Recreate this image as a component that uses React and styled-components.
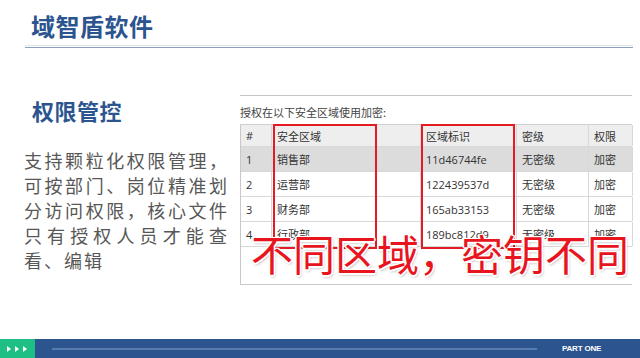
import React from 'react'
import styled, { createGlobalStyle } from 'styled-components'

const GlobalStyle = createGlobalStyle`
    html, body {
        margin: 0;
        padding: 0;
        background: #ffffff;
    }
    body {
        font-family: "Noto Sans CJK SC", "Noto Sans", sans-serif;
    }
`

const rows = [
    { id: 1, area: '销售部', key: '11d46744fe', level: '无密级', right: '加密', selected: true },
    { id: 2, area: '运营部', key: '122439537d', level: '无密级', right: '加密' },
    { id: 3, area: '财务部', key: '165ab33153', level: '无密级', right: '加密' },
    { id: 4, area: '行政部', key: '189bc812d9', level: '无密级', right: '加密' },
]

const App = () => {
    return (
        <Page>
            <GlobalStyle />
            <Header>
                <Title>域智盾软件</Title>
                <Rule />
            </Header>

            <Main>
                <Side>
                    <SubTitle>权限管控</SubTitle>
                    <Desc>支持颗粒化权限管理，可按部门、岗位精准划分访问权限，核心文件只有授权人员才能查看、编辑</Desc>
                </Side>

                <Shot>
                    <Caption>授权在以下安全区域使用加密:</Caption>
                    <TableWrap>
                        <Row head>
                            <Cell>#</Cell>
                            <Cell>安全区域</Cell>
                            <Cell>区域标识</Cell>
                            <Cell>密级</Cell>
                            <Cell>权限</Cell>
                        </Row>
                        {rows.map(r =>
                            <Row key={r.id} selected={r.selected}>
                                <Cell>{r.id}</Cell>
                                <Cell>{r.area}</Cell>
                                <Cell>{r.key}</Cell>
                                <Cell>{r.level}</Cell>
                                <Cell>{r.right}</Cell>
                            </Row>
                        )}
                        <Mark left={32} width={104} />
                        <Mark left={180} width={94} />
                        <Stamp>不同区域，密钥不同</Stamp>
                    </TableWrap>
                </Shot>
            </Main>

            <Footer>
                <Arrows>
                    <Tri />
                    <Tri />
                    <Tri />
                </Arrows>
                <FootBar>
                    <FootLine />
                    <Part>PART ONE</Part>
                </FootBar>
            </Footer>
        </Page>
    )
}

const Page = styled.div`
    width: 640px;
    height: 358px;
    display: flex;
    flex-direction: column;
    overflow: hidden;
`

const Header = styled.div`
    height: 48px;
    display: flex;
    flex-direction: column;
`

const Title = styled.h1`
    margin: 14px 0 0 31px;
    font-size: 24px;
    line-height: 24px;
    font-weight: 700;
    color: #2c5590;
    letter-spacing: 0.5px;
`

const Rule = styled.div`
    margin: 7px 0 0 25px;
    width: 608px;
    height: 1px;
    border-top: 1px solid #dfe4ec;
    border-bottom: 1px solid #8ba0bf;
`

const Main = styled.div`
    flex: 1;
    display: flex;
`

const Side = styled.div`
    width: 240px;
    flex-shrink: 0;
    padding-left: 24px;
    box-sizing: border-box;
    display: flex;
    flex-direction: column;
`

const SubTitle = styled.h2`
    margin: 51px 0 0 8px;
    font-size: 22px;
    line-height: 22px;
    font-weight: 700;
    color: #2c5590;
    letter-spacing: 0.5px;
`

const Desc = styled.p`
    margin: 27px 0 0 0;
    width: 205px;
    font-size: 18px;
    line-height: 25px;
    letter-spacing: 2px;
    color: #575757;
    text-align: justify;
`

const Shot = styled.div`
    margin-top: 47px;
    width: 392px;
    height: 189px;
    flex-shrink: 0;
    border-top: 1px solid #c6c6c6;
    display: flex;
    flex-direction: column;
`

const Caption = styled.div`
    margin: 9px 0 0 0;
    font-size: 11px;
    line-height: 14px;
    color: #444;
`

const TableWrap = styled.div`
    position: relative;
    margin-top: 5px;
    flex: 1;
    border-left: 1px solid #c8c8c8;
    border-bottom: 1px solid #c8c8c8;
    border-top: 1px solid #d0d0d0;
`

const Row = styled.div`
    display: grid;
    grid-template-columns: 31px 149px 96px 72px 44px;
    height: ${p => (p.head ? '22px' : '25px')};
    background: ${p => (p.head ? '#eeeeee' : p.selected ? '#dcdcdc' : '#ffffff')};
    border-bottom: 1px solid #d8d8d8;
    box-sizing: border-box;
    font-size: 11px;
    color: #333;
`

const Cell = styled.div`
    display: flex;
    align-items: center;
    padding-left: 5px;
    border-right: 1px solid #d8d8d8;
    font-family: "Open Sans", "Noto Sans CJK SC", sans-serif;
    white-space: nowrap;
    overflow: hidden;
`

const Mark = styled.div`
    position: absolute;
    top: -1px;
    left: ${p => p.left}px;
    width: ${p => p.width}px;
    height: 125px;
    border: 2px solid #e51b24;
    box-sizing: border-box;
`

const Stamp = styled.div`
    position: absolute;
    left: 10px;
    top: 107px;
    font-size: 42px;
    line-height: 42px;
    white-space: nowrap;
    color: #e8141e;
    font-family: "Noto Sans CJK SC", sans-serif;
    font-weight: 400;
    text-shadow:
        1.5px 0 0 #fff, -1.5px 0 0 #fff, 0 1.5px 0 #fff, 0 -1.5px 0 #fff,
        1px 1px 0 #fff, -1px -1px 0 #fff, 1px -1px 0 #fff, -1px 1px 0 #fff,
        1px 2px 3px rgba(0,0,0,0.35);
`

const Footer = styled.div`
    height: 19px;
    display: flex;
`

const Arrows = styled.div`
    width: 35px;
    background: #1dbf84;
    display: flex;
    align-items: center;
    padding-left: 7px;
    box-sizing: border-box;
    gap: 4px;
`

const Tri = styled.div`
    width: 0;
    height: 0;
    border-top: 3px solid transparent;
    border-bottom: 3px solid transparent;
    border-left: 4px solid #ffffff;
`

const FootBar = styled.div`
    flex: 1;
    background: #2c5590;
    display: flex;
    align-items: center;
    padding-left: 17px;
`

const FootLine = styled.div`
    width: 485px;
    height: 2px;
    background: #5a7bad;
`

const Part = styled.span`
    margin-left: 25px;
    font-family: "Liberation Sans Narrow", "Liberation Sans", sans-serif;
    font-size: 8px;
    font-weight: 700;
    color: #ffffff;
    letter-spacing: -0.2px;
`

export default App
